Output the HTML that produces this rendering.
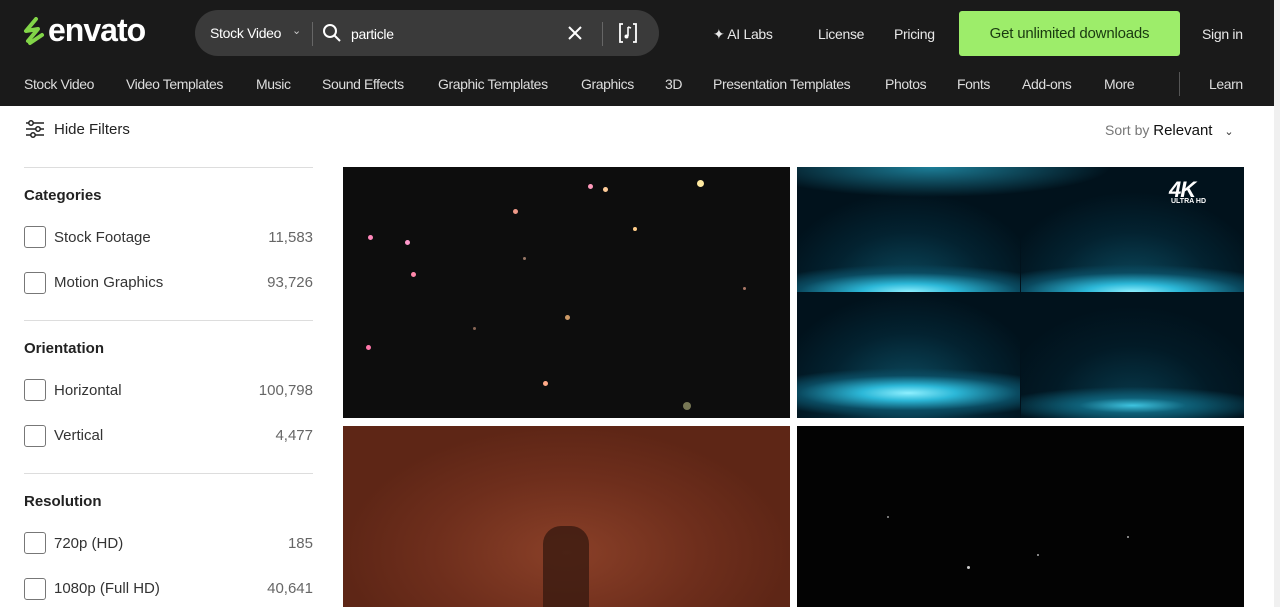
<!DOCTYPE html>
<html><head><meta charset="utf-8"><style>
*{box-sizing:border-box;margin:0;padding:0}
body{width:1280px;height:607px;overflow:hidden;background:#fff;font-family:"Liberation Sans",sans-serif;position:relative}
.hdr{position:absolute;left:0;top:0;width:1274px;height:106px;background:#1a1a1a}
.sb{position:absolute;right:0;top:0;width:6px;height:607px;background:#f0f0f0}
.t{position:absolute;color:#e8e8e8;font-size:14px;white-space:nowrap;letter-spacing:-0.3px}
.nav{position:absolute;top:76px;color:#ddd;font-size:14px;white-space:nowrap;letter-spacing:-0.4px}
.search{position:absolute;left:195px;top:10px;width:464px;height:46px;border-radius:23px;background:#3a3a3a}
.btn{position:absolute;left:959px;top:11px;width:221px;height:45px;background:#9ded6a;border-radius:3px;color:#1a3a10;font-size:15px;text-align:center;line-height:45px;letter-spacing:-0.2px}
.hr{position:absolute;left:24px;width:289px;height:1px;background:#ddd}
.h{position:absolute;left:24px;font-size:15px;font-weight:bold;color:#222}
.cb{position:absolute;left:24px;width:22px;height:22px;border:1.5px solid #777;border-radius:3px}
.lb{position:absolute;left:54px;font-size:15px;color:#333}
.ct{position:absolute;right:967px;font-size:15px;color:#666}
.img{position:absolute;overflow:hidden}
.d{position:absolute;border-radius:50%}
.q{position:absolute;width:223px;height:125px;background:radial-gradient(ellipse 70% 22% at 50% 100%,#8ff0ff 0%,#2cb8d8 30%,#0a4a60 70%,transparent 100%),radial-gradient(ellipse 60% 80% at 50% 100%,#0c4d62 0%,#032230 60%,#01121c 100%)}
</style></head><body>
<div class="hdr"></div>
<div class="sb"></div>
<svg style="position:absolute;left:22px;top:17px" width="26" height="32" viewBox="0 0 26 32"><path d="M14 2 L4 14 L16 12 L6 24 M8 26 L20 18" stroke="#82d548" stroke-width="4" fill="none" stroke-linecap="round" stroke-linejoin="round"/></svg>
<div class="t" style="left:48px;top:12px;font-size:32px;font-weight:bold;color:#fff;letter-spacing:-1px">envato</div>
<div class="search"></div>
<div class="t" style="left:210px;top:25px;font-size:14px;color:#fff">Stock Video</div>
<div class="t" style="left:292px;top:24px;font-size:11px;color:#ccc">⌄</div>
<div style="position:absolute;left:312px;top:22px;width:1px;height:24px;background:#666"></div>
<svg style="position:absolute;left:322px;top:23px" width="20" height="20"><circle cx="8" cy="8" r="6" stroke="#fff" stroke-width="2" fill="none"/><path d="M12.5 12.5 L18 18" stroke="#fff" stroke-width="2"/></svg>
<div class="t" style="left:351px;top:26px;color:#fff">particle</div>
<svg style="position:absolute;left:567px;top:25px" width="16" height="16"><path d="M2 2L14 14M14 2L2 14" stroke="#fff" stroke-width="2"/></svg>
<div style="position:absolute;left:602px;top:22px;width:1px;height:24px;background:#666"></div>
<svg style="position:absolute;left:618px;top:22px" width="20" height="22"><path d="M5 2H2V20H5M15 2H18V20H15" stroke="#fff" stroke-width="1.8" fill="none"/><path d="M10 5V14M10 5L13 6" stroke="#fff" stroke-width="1.6" fill="none"/><circle cx="8.5" cy="14.5" r="2" fill="#fff"/></svg>
<div class="t" style="left:713px;top:26px">✦ AI Labs</div>
<div class="t" style="left:818px;top:26px">License</div>
<div class="t" style="left:894px;top:26px">Pricing</div>
<div class="btn">Get unlimited downloads</div>
<div class="t" style="left:1202px;top:26px">Sign in</div>
<div class="nav" style="left:24px">Stock Video</div>
<div class="nav" style="left:126px">Video Templates</div>
<div class="nav" style="left:256px">Music</div>
<div class="nav" style="left:322px">Sound Effects</div>
<div class="nav" style="left:438px">Graphic Templates</div>
<div class="nav" style="left:581px">Graphics</div>
<div class="nav" style="left:665px">3D</div>
<div class="nav" style="left:713px">Presentation Templates</div>
<div class="nav" style="left:885px">Photos</div>
<div class="nav" style="left:957px">Fonts</div>
<div class="nav" style="left:1022px">Add-ons</div>
<div class="nav" style="left:1104px">More</div>
<div style="position:absolute;left:1179px;top:72px;width:1px;height:24px;background:#555"></div>
<div class="nav" style="left:1209px">Learn</div>

<svg style="position:absolute;left:25px;top:120px" width="20" height="18"><path d="M1 3H19M1 9H19M1 15H19" stroke="#222" stroke-width="1.6"/><circle cx="6" cy="3" r="2.2" fill="#fff" stroke="#222" stroke-width="1.5"/><circle cx="13" cy="9" r="2.2" fill="#fff" stroke="#222" stroke-width="1.5"/><circle cx="8" cy="15" r="2.2" fill="#fff" stroke="#222" stroke-width="1.5"/></svg>
<div style="position:absolute;left:54px;top:121px;font-size:15px;color:#222">Hide Filters</div>
<div style="position:absolute;left:1105px;top:122px;font-size:14px;color:#777">Sort by <span style="color:#111;font-size:15px">Relevant</span> <span style="font-size:11px;color:#333;margin-left:8px">⌄</span></div>

<div class="hr" style="top:167px"></div>
<div class="h" style="top:187px">Categories</div>
<div class="cb" style="top:226px"></div><div class="lb" style="top:229px">Stock Footage</div><div class="ct" style="top:229px">11,583</div>
<div class="cb" style="top:272px"></div><div class="lb" style="top:274px">Motion Graphics</div><div class="ct" style="top:274px">93,726</div>
<div class="hr" style="top:320px"></div>
<div class="h" style="top:340px">Orientation</div>
<div class="cb" style="top:379px"></div><div class="lb" style="top:382px">Horizontal</div><div class="ct" style="top:382px">100,798</div>
<div class="cb" style="top:425px"></div><div class="lb" style="top:427px">Vertical</div><div class="ct" style="top:427px">4,477</div>
<div class="hr" style="top:473px"></div>
<div class="h" style="top:493px">Resolution</div>
<div class="cb" style="top:532px"></div><div class="lb" style="top:535px">720p (HD)</div><div class="ct" style="top:535px">185</div>
<div class="cb" style="top:578px"></div><div class="lb" style="top:580px">1080p (Full HD)</div><div class="ct" style="top:580px">40,641</div>

<div class="img" style="left:343px;top:167px;width:447px;height:251px;background:#0d0d0d">
<div class="d" style="left:354px;top:13px;width:7px;height:7px;background:#ffe9a0"></div>
<div class="d" style="left:245px;top:17px;width:5px;height:5px;background:#f9b"></div>
<div class="d" style="left:260px;top:20px;width:5px;height:5px;background:#fc9"></div>
<div class="d" style="left:25px;top:68px;width:5px;height:5px;background:#f8b"></div>
<div class="d" style="left:62px;top:73px;width:5px;height:5px;background:#f9c"></div>
<div class="d" style="left:68px;top:105px;width:5px;height:5px;background:#f8a"></div>
<div class="d" style="left:170px;top:42px;width:5px;height:5px;background:#e98"></div>
<div class="d" style="left:222px;top:148px;width:5px;height:5px;background:#c96"></div>
<div class="d" style="left:23px;top:178px;width:5px;height:5px;background:#f7a"></div>
<div class="d" style="left:200px;top:214px;width:5px;height:5px;background:#fa8"></div>
<div class="d" style="left:340px;top:235px;width:8px;height:8px;background:#775"></div>
<div class="d" style="left:290px;top:60px;width:4px;height:4px;background:#fc8"></div>
<div class="d" style="left:130px;top:160px;width:3px;height:3px;background:#865"></div>
<div class="d" style="left:400px;top:120px;width:3px;height:3px;background:#a76"></div>
<div class="d" style="left:180px;top:90px;width:3px;height:3px;background:#976"></div>
</div>
<div class="img" style="left:797px;top:167px;width:447px;height:251px;background:#01121c">
<div class="q" style="left:0;top:0"></div>
<div class="q" style="left:224px;top:0"></div>
<div class="q" style="left:0;top:126px;background:radial-gradient(ellipse 70% 20% at 50% 80%,#8ff0ff 0%,#2cb8d8 30%,#0a4a60 70%,transparent 100%),radial-gradient(ellipse 60% 80% at 50% 80%,#0c4d62 0%,#032230 60%,#01121c 100%)"></div>
<div class="q" style="left:224px;top:126px;background:radial-gradient(ellipse 60% 15% at 50% 90%,#3ec4e0 0%,#0e6078 40%,transparent 100%),radial-gradient(ellipse 60% 80% at 50% 90%,#083a4c 0%,#021a26 60%,#01121c 100%)"></div>
<div style="position:absolute;left:0;top:0;width:447px;height:30px;background:radial-gradient(ellipse 40% 100% at 30% 0%,#1c7e98,transparent)"></div>
<div style="position:absolute;left:372px;top:10px;color:#fff;font-weight:bold;font-size:22px;font-style:italic;letter-spacing:-1px">4K</div>
<div style="position:absolute;left:374px;top:31px;color:#fff;font-weight:bold;font-size:7px">ULTRA HD</div>
</div>
<div class="img" style="left:343px;top:426px;width:447px;height:181px;background:radial-gradient(ellipse 50% 70% at 50% 70%,#8a4028,#6e2e1c 60%,#5e2616)">
<div style="position:absolute;left:200px;top:100px;width:46px;height:81px;background:#3a1a10;border-radius:18px 18px 0 0;opacity:.8"></div>
</div>
<div class="img" style="left:797px;top:426px;width:447px;height:181px;background:#030303">
<div class="d" style="left:170px;top:140px;width:3px;height:3px;background:#ccc"></div>
<div class="d" style="left:240px;top:128px;width:2px;height:2px;background:#aaa"></div>
<div class="d" style="left:330px;top:110px;width:2px;height:2px;background:#aaa"></div>
<div class="d" style="left:90px;top:90px;width:2px;height:2px;background:#999"></div>
</div>
</body></html>
